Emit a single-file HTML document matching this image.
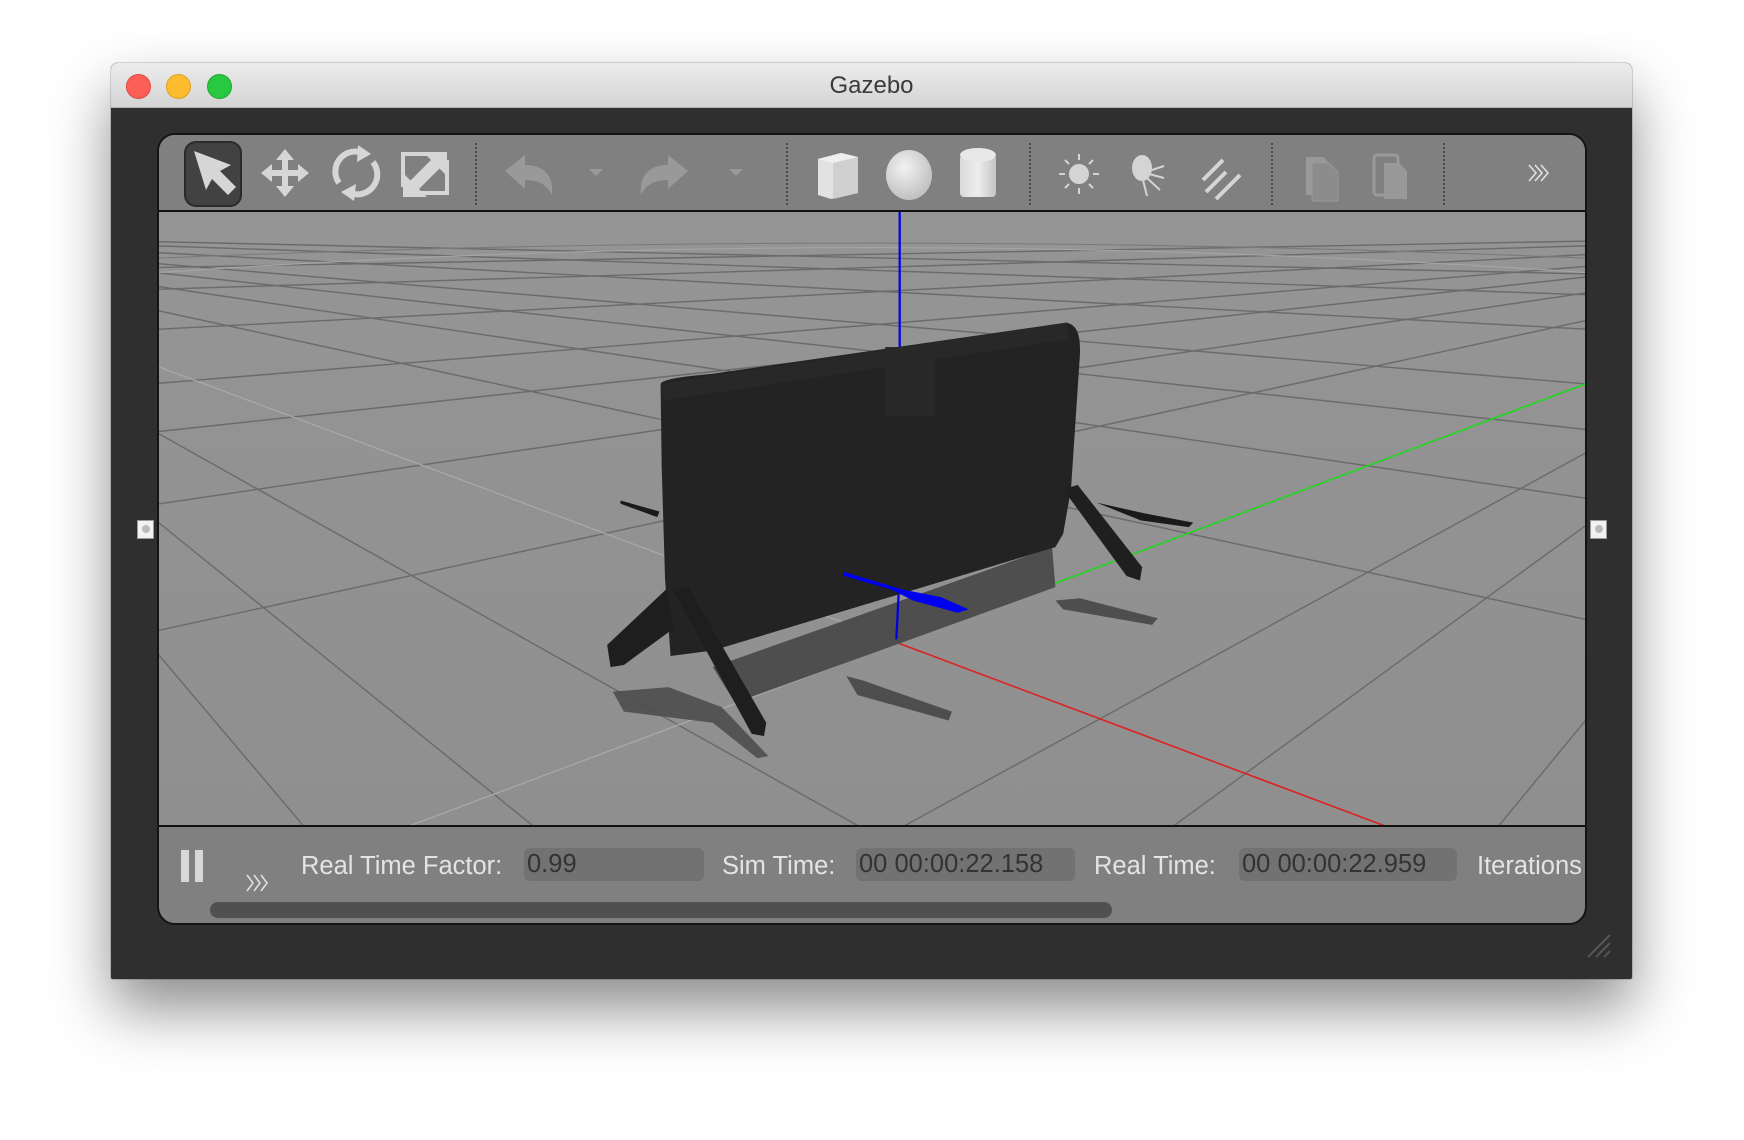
<!DOCTYPE html>
<html><head><meta charset="utf-8">
<style>
*{margin:0;padding:0;box-sizing:border-box}
html,body{width:1744px;height:1140px;overflow:hidden}
body{background:#fff;position:relative;font-family:"Liberation Sans",sans-serif}
.win{position:absolute;left:111px;top:63px;width:1521px;height:916px;background:#2f2f2f;border-radius:7px 7px 2px 2px;box-shadow:0 30px 60px rgba(0,0,0,.45),0 0 0 1px rgba(0,0,0,.15);overflow:hidden}
.title{position:absolute;left:0;top:0;width:100%;height:45px;background:linear-gradient(#ececec,#d4d4d4);border-bottom:1px solid #b5b5b5;text-align:center;font-size:24px;line-height:45px;color:#3a3a3a}
.dot{position:absolute;top:11px;width:25px;height:25px;border-radius:50%}
.panel{position:absolute;left:157px;top:133px;width:1430px;height:792px;background:#808080;border:2px solid #141414;border-radius:18px;overflow:hidden}
.abs{position:absolute}
.lbl{position:absolute;top:715px;font-size:25.5px;color:#e4e4e4;line-height:32px;letter-spacing:0}
.box{position:absolute;top:713px;height:33px;background:#727272;border-radius:6px;font-size:25.5px;color:#333;line-height:33px;padding-left:3px}
.sep{position:absolute;top:8px;height:62px;border-left:2px dotted #4a4a4a}
</style></head><body>
<div class="win">
 <div class="title">Gazebo
  <div class="dot" style="left:15px;background:#fc5f57;border:1px solid #de4a42"></div>
  <div class="dot" style="left:55px;background:#fdbc2e;border:1px solid #dea123"></div>
  <div class="dot" style="left:96px;background:#28c840;border:1px solid #1eaa30"></div>
 </div>
 <svg class="abs" style="left:1475px;top:870px" width="26" height="26" viewBox="0 0 26 26"><path d="M2 24L24 2M10 24L24 10M18 24L24 18" stroke="#555" stroke-width="2"/></svg>
</div>
<div style="position:absolute;left:137px;top:520px;width:17px;height:19px;background:#f2f2f2;border:1px solid #999"><div style="margin:4px auto;width:8px;height:8px;border-radius:50%;background:#bbb"></div></div>
<div style="position:absolute;left:1590px;top:520px;width:17px;height:19px;background:#f2f2f2;border:1px solid #999"><div style="margin:4px auto;width:8px;height:8px;border-radius:50%;background:#bbb"></div></div>

<div class="panel">
 <div class="abs" style="left:0;top:0;width:100%;height:77px;background:#808080;border-bottom:2px solid #111"></div>
 <div class="abs" style="left:25px;top:6px;width:58px;height:66px;background:#424242;border:2px solid #2a2a2a;border-radius:12px"></div>
 <svg class="abs" style="left:0;top:0" width="1430" height="78" viewBox="0 0 1430 78">
  <defs>
   <radialGradient id="sg" cx="0.4" cy="0.35" r="0.7"><stop offset="0" stop-color="#f2f2f2"/><stop offset="1" stop-color="#bdbdbd"/></radialGradient>
   <linearGradient id="cg" x1="0" x2="1"><stop offset="0" stop-color="#d9d9d9"/><stop offset=".5" stop-color="#eee"/><stop offset="1" stop-color="#c4c4c4"/></linearGradient>
  </defs>
  <path d="M35 16L72 30L61 36L77 52L69 60L53 44L47 55Z" fill="#d6d6d6"/>
  <g transform="translate(126,39)" fill="#d6d6d6"><path d="M0 -25L9 -14H3V-4H13V-10L24 -1L13 8V2H3V12H9L0 23L-9 12H-3V2H-13V8L-24 -1L-13 -10V-4H-3V-14H-9Z"/></g>
  <g transform="translate(197,39)">
   <g fill="none" stroke="#d6d6d6" stroke-width="6"><path d="M-17 9A20 20 0 0 1 7 -21"/><path d="M17 -12A20 20 0 0 1 -6 19"/></g>
   <path d="M2 -29L15 -20L1 -12Z M-2 27L-15 18L0 10Z" fill="#d6d6d6"/>
  </g>
  <g transform="translate(266,39)">
   <path d="M-22 13V-20H12M22 -14V19H-12" fill="none" stroke="#d6d6d6" stroke-width="4"/>
   <path d="M-2 -22H22V2L14 -6L-8 16L-16 8L6 -14Z M-22 23V-1L-14 7L8 -15L16 -7L-6 15L2 23Z" fill="#d6d6d6"/>
  </g>
  <g transform="translate(368,39)"><path d="M-22 -3L-2 -19V-9C18 -9 27 3 25 21C20 11 12 6 -2 6V15Z" fill="#999"/></g>
  <path d="M430 34H444L437 41Z" fill="#999"/>
  <g transform="translate(507,39)"><path d="M22 -3L2 -19V-9C-18 -9 -27 3 -25 21C-20 11 -12 6 2 6V15Z" fill="#999"/></g>
  <path d="M570 34H584L577 41Z" fill="#999"/>
  <g transform="translate(679,0)">
   <path d="M-20 24L3 18L20 22V58L-7 64L-20 60Z" fill="#e2e2e2"/>
   <path d="M-20 24L3 18L20 22L-5 28Z" fill="#efefef"/>
   <path d="M-5 28L20 22V58L-5 64Z" fill="#d0d0d0"/>
  </g>
  <ellipse cx="750" cy="40" rx="23" ry="25" fill="url(#sg)"/>
  <rect x="801" y="20" width="36" height="42" rx="4" fill="url(#cg)"/>
  <ellipse cx="819" cy="20" rx="18" ry="7" fill="#e8e8e8"/>
  <g fill="#d4d4d4" stroke="#d4d4d4" stroke-width="2">
   <g transform="translate(920,39)"><circle cx="0" cy="0" r="9"/><path d="M0 -20V-14M0 14V20M-20 0H-14M14 0H20M-14 -14L-10 -10M14 -14L10 -10M-14 14L-10 10M14 14L10 10" fill="none"/></g>
   <g transform="translate(991,39)"><ellipse cx="-8" cy="-6" rx="9" ry="12"/><path d="M-1 -3L14 -8M-1 0L14 4M-3 4L10 16M-7 6L-3 22" fill="none"/></g>
   <g transform="translate(1061,39)"><path d="M-14 18L6 -2M-4 25L20 1M-17 6L3 -14" fill="none" stroke-width="4"/></g>
  </g>
  <g transform="translate(1163,0)"><path d="M-16 22H1L10 31V60H-16Z" fill="#999"/><path d="M-10 28H7L16 37V66H-10Z" fill="#8c8c8c" stroke="#999"/></g>
  <g transform="translate(1232,0)"><rect x="-17" y="20" width="24" height="40" rx="3" fill="none" stroke="#999" stroke-width="3"/><path d="M-7 28H8L16 36V64H-7Z" fill="#999"/></g>
  <path d="M1370 30L1377 38L1370 46M1376 30L1383 38L1376 46M1382 30L1389 38L1382 46" fill="none" stroke="#e0e0e0" stroke-width="1.6"/>
 </svg>
 <div class="sep" style="left:316px"></div>
 <div class="sep" style="left:627px"></div>
 <div class="sep" style="left:870px"></div>
 <div class="sep" style="left:1112px"></div>
 <div class="sep" style="left:1284px"></div>

 <svg class="abs" style="left:0;top:77px" width="1428" height="613" viewBox="142 190.5 1284 551.5" preserveAspectRatio="none">
  <defs><linearGradient id="bg" x1="0" y1="0" x2="0" y2="1"><stop offset="0" stop-color="#959595"/><stop offset="1" stop-color="#8f8f8f"/></linearGradient></defs>
  <rect x="142" y="190" width="1284" height="552" fill="url(#bg)"/>
  <g stroke="#6b6b6b" stroke-width="1.3" fill="none">
   <path d="M1785 210L-2000 280M1785 210L-2000 325M1785 210L-2000 408M1785 210L-2000 520M1785 210L-2000 620M1785 210L-2000 770M1785 210L-2000 1032M1785 210L-2000 2283M1785 210L-2000 2970M1785 210L-2000 4810"/>
   <path d="M-179 210L3500 293M-179 210L3500 336M-179 210L3500 407M-179 210L3500 520M-179 210L3500 614M-179 210L3500 756M-179 210L3500 1006M-179 210L3500 2274M-179 210L3500 3192M-179 210L3500 4557"/>
  </g>
  <g stroke="#a8a8a8" stroke-width="1.2" fill="none">
   <path d="M806 578L-2000 1632"/>
   <path d="M806 578L-179 210"/>
  </g>
  <path d="M142 245Q780 200 1425 245" stroke="#a5a5a5" stroke-width="1" fill="none"/>
  <path d="M142 232Q780 205 1425 232" stroke="#7a7a7a" stroke-width="1" fill="none"/>
  <path d="M808 190V312" stroke="#0000e6" stroke-width="2"/>
  <path d="M806 578L1425 345" stroke="#1ed81e" stroke-width="1.4"/>
  <path d="M806 578L1250 745" stroke="#e02020" stroke-width="1.4"/>
  <g fill="#4e4e4e">
   <path d="M640 600L945 492L948 528L660 632Z"/>
   <path d="M550 622L600 618L648 636L690 680L680 682L640 650L560 640Z" opacity=".9"/>
   <path d="M760 608L775 612L855 640L852 648L770 625Z"/>
   <path d="M948 540L970 538L1040 556L1035 562L955 548Z"/>
  </g>
  <path d="M805 575L808 515" stroke="#0000e6" stroke-width="2"/>
  <path d="M593 345C596 340 620 338 640 336L958 290C967 292 971 300 970 320L962 440L955 480L948 492L640 585L602 590L597 520L594 420Z" fill="#232323"/>
  <path d="M593 345L958 290L960 305L597 360Z" fill="#282828"/>
  <rect x="795" y="312" width="45" height="62" fill="#282828"/>
  <path d="M605 532L618 528L688 650L686 662L675 660Z" fill="#1e1e1e"/>
  <path d="M598 530L545 580L548 600L560 598L605 565Z" fill="#1e1e1e"/>
  <path d="M955 440L968 436L1026 510L1024 522L1012 518Z" fill="#1f1f1f"/>
  <path d="M557 450L592 460L590 465L557 453Z" fill="#1a1a1a"/>
  <path d="M985 452L1030 462L1072 470L1068 474L1025 468Z" fill="#1a1a1a"/>
  <path d="M757 514L810 530L845 537L870 548L860 551L820 540L800 530L758 518Z" fill="#0000f0"/>
 </svg>
 <div class="abs" style="left:0;top:690px;width:100%;height:2px;background:#111"></div>

 <div class="abs" style="left:22px;top:715px;width:8px;height:32px;background:#d8d8d8"></div>
 <div class="abs" style="left:36px;top:715px;width:8px;height:32px;background:#d8d8d8"></div>
 <svg class="abs" style="left:86px;top:737px" width="30" height="22" viewBox="0 0 30 22"><path d="M2 3L8 11L2 19M9 3L15 11L9 19M16 3L22 11L16 19" fill="none" stroke="#e0e0e0" stroke-width="1.6"/></svg>
 <div class="lbl" style="left:142px">Real Time Factor:</div>
 <div class="box" style="left:365px;width:180px">0.99</div>
 <div class="lbl" style="left:563px">Sim Time:</div>
 <div class="box" style="left:697px;width:219px">00 00:00:22.158</div>
 <div class="lbl" style="left:935px">Real Time:</div>
 <div class="box" style="left:1080px;width:218px">00 00:00:22.959</div>
 <div class="lbl" style="left:1318px">Iterations</div>
 <div class="abs" style="left:51px;top:767px;width:902px;height:16px;background:#505050;border-radius:8px"></div>
</div>
</body></html>
